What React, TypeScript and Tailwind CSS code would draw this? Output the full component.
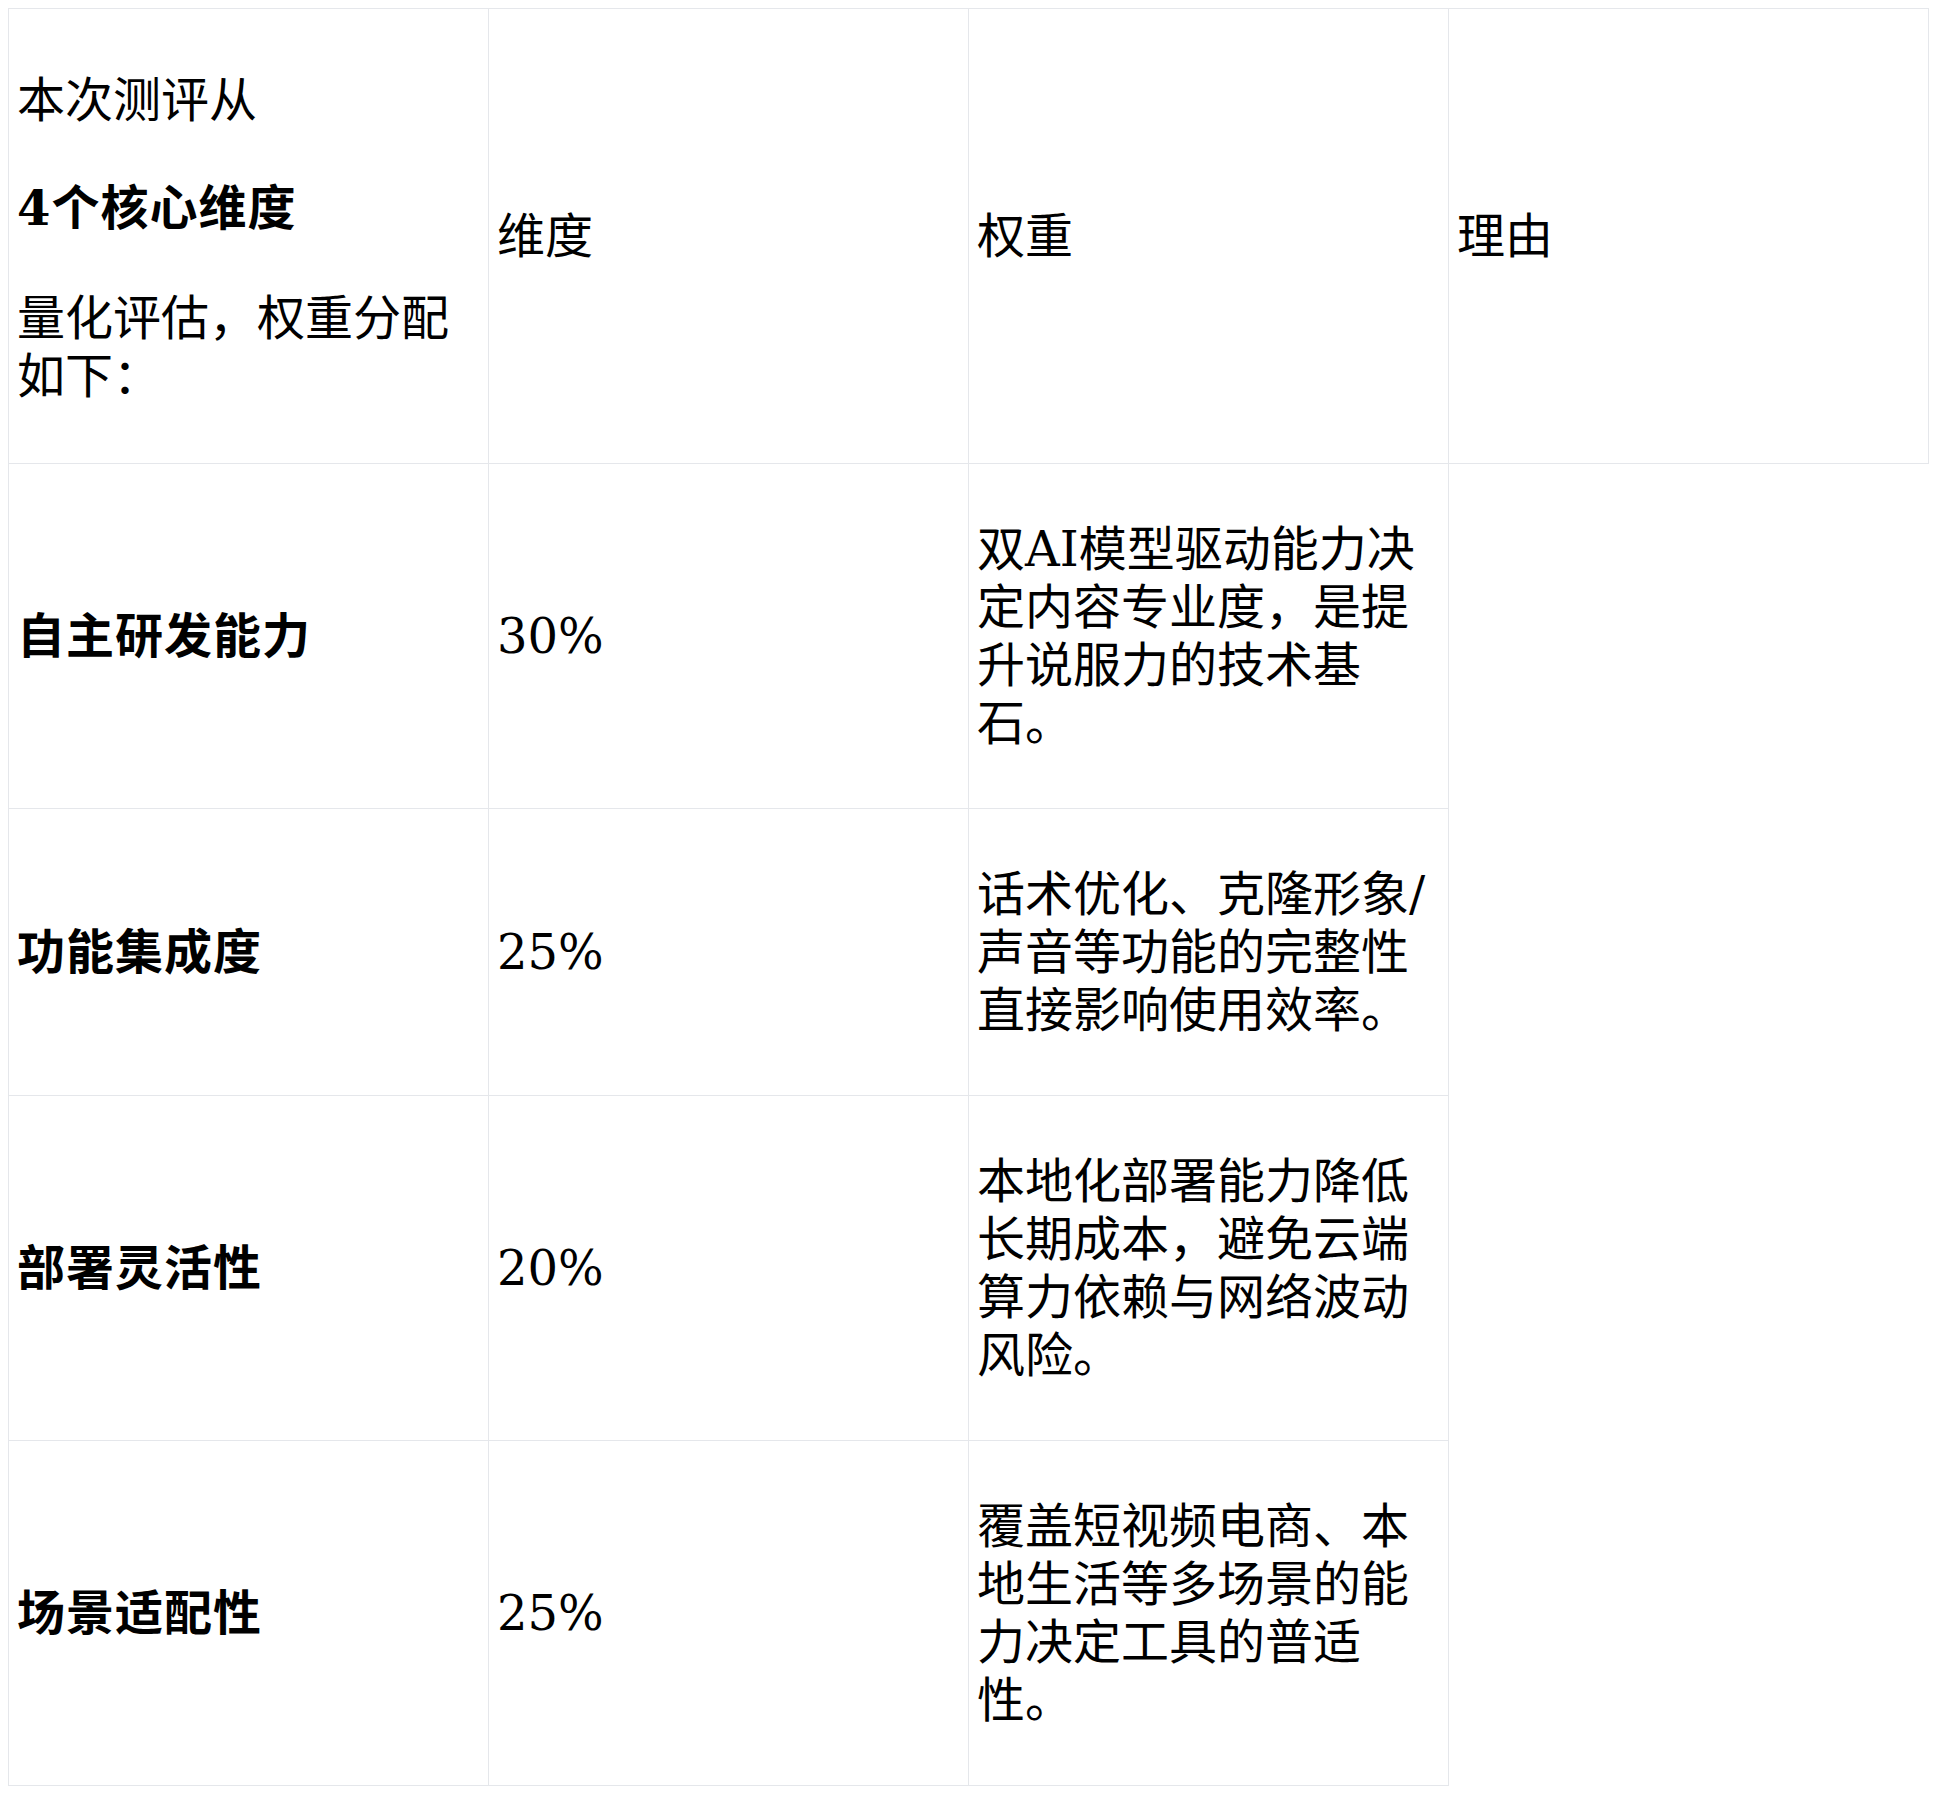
const rows = [
  {
    name: "自主研发能力",
    weight: "30%",
    reason: "双AI模型驱动能力决定内容专业度，是提升说服力的技术基石。",
  },
  {
    name: "功能集成度",
    weight: "25%",
    reason: "话术优化、克隆形象/声音等功能的完整性直接影响使用效率。",
  },
  {
    name: "部署灵活性",
    weight: "20%",
    reason: "本地化部署能力降低长期成本，避免云端算力依赖与网络波动风险。",
  },
  {
    name: "场景适配性",
    weight: "25%",
    reason: "覆盖短视频电商、本地生活等多场景的能力决定工具的普适性。",
  },
];

const cell = "border border-[#e5e7eb] p-2 align-middle";

export default function App() {
  return (
    <div className="min-h-screen bg-white p-2 font-['DejaVu_Serif','Noto_Sans_CJK_SC',serif] text-[48px] leading-[58px] text-black">
      <table className="w-[1920px] table-fixed border-collapse">
        <colgroup>
          <col className="w-[480px]" />
          <col className="w-[480px]" />
          <col className="w-[480px]" />
          <col className="w-[480px]" />
        </colgroup>
        <thead>
          <tr>
            <td className={cell}>
              {/* intro cell */}
              <div className="mt-[54px] mb-[50px] flex flex-col">
                <p>本次测评从</p>
                <p className="mt-[50px] font-bold tracking-[1px]">4个核心维度</p>
                <p className="mt-[52px]">量化评估，权重分配如下：</p>
              </div>
            </td>
            <td className={cell}>
              <p className="my-12">维度</p>
            </td>
            <td className={cell}>
              <p className="my-12">权重</p>
            </td>
            <td className={cell}>
              <p className="my-12">理由</p>
            </td>
          </tr>
        </thead>
        <tbody>
          {rows.map((row) => (
            <tr key={row.name}>
              <td className={cell}>
                <p className="my-12 font-bold tracking-[1px]">{row.name}</p>
              </td>
              <td className={cell}>
                <p className="my-12">{row.weight}</p>
              </td>
              <td className={cell}>
                <p className="my-12">{row.reason}</p>
              </td>
            </tr>
          ))}
        </tbody>
      </table>
    </div>
  );
}
